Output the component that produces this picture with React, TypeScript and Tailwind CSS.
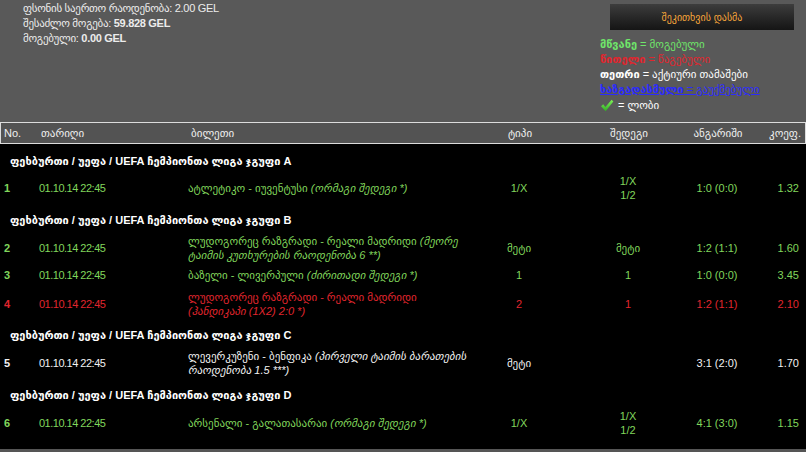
import React from 'react';

type Row = {
  kind: 'row';
  no: string;
  date: string;
  ticket: React.ReactNode;
  type: React.ReactNode;
  result: React.ReactNode;
  score: string;
  coef: string;
  color: 'green' | 'red' | 'white';
  cls: string;
};

type Group = { kind: 'group'; label: string; cls: string };

const colorCls = {
  green: 'text-[#80d65c]',
  red: 'text-[#e0262e]',
  white: 'text-[#f2f2f2]',
};

const twoLines = (a: string, b: string) => (
  <div className="flex flex-col items-center leading-[14px]">
    <span>{a}</span>
    <span>{b}</span>
  </div>
);

const items: (Row | Group)[] = [
  { kind: 'group', label: 'ფეხბურთი / უეფა / UEFA ჩემპიონთა ლიგა ჯგუფი A', cls: 'h-[26px]' },
  {
    kind: 'row', no: '1', date: '01.10.14 22:45', color: 'green', cls: 'h-[28px]',
    ticket: <span>ატლეტიკო - იუვენტუსი <i>(ორმაგი შედეგი *)</i></span>,
    type: '1/X', result: twoLines('1/X', '1/2'), score: '1:0 (0:0)', coef: '1.32',
  },
  { kind: 'group', label: 'ფეხბურთი / უეფა / UEFA ჩემპიონთა ლიგა ჯგუფი B', cls: 'mt-[4px] h-[28px]' },
  {
    kind: 'row', no: '2', date: '01.10.14 22:45', color: 'green', cls: 'h-[27px]',
    ticket: (
      <div className="flex flex-col leading-[14px]">
        <span>ლუდოგორეც რაზგრადი - რეალი მადრიდი <i>(მეორე</i></span>
        <i>ტაიმის კუთხურების რაოდენობა 6 **)</i>
      </div>
    ),
    type: 'მეტი', result: 'მეტი', score: '1:2 (1:1)', coef: '1.60',
  },
  {
    kind: 'row', no: '3', date: '01.10.14 22:45', color: 'green', cls: 'h-[28px]',
    ticket: <span>ბაზელი - ლივერპული <i>(ძირითადი შედეგი *)</i></span>,
    type: '1', result: '1', score: '1:0 (0:0)', coef: '3.45',
  },
  {
    kind: 'row', no: '4', date: '01.10.14 22:45', color: 'red', cls: 'mt-[1px] h-[28px]',
    ticket: (
      <div className="flex flex-col leading-[14px]">
        <span>ლუდოგორეც რაზგრადი - რეალი მადრიდი</span>
        <i>(ჰანდიკაპი (1X2) 2:0 *)</i>
      </div>
    ),
    type: '2', result: '1', score: '1:2 (1:1)', coef: '2.10',
  },
  { kind: 'group', label: 'ფეხბურთი / უეფა / UEFA ჩემპიონთა ლიგა ჯგუფი C', cls: 'mt-[4px] h-[27px]' },
  {
    kind: 'row', no: '5', date: '01.10.14 22:45', color: 'white', cls: 'h-[28px]',
    ticket: (
      <div className="flex flex-col leading-[14px]">
        <span>ლევერკუზენი - ბენფიკა <i>(პირველი ტაიმის ბარათების</i></span>
        <i>რაოდენობა 1.5 ***)</i>
      </div>
    ),
    type: 'მეტი', result: '', score: '3:1 (2:0)', coef: '1.70',
  },
  { kind: 'group', label: 'ფეხბურთი / უეფა / UEFA ჩემპიონთა ლიგა ჯგუფი D', cls: 'mt-[5px] h-[27px]' },
  {
    kind: 'row', no: '6', date: '01.10.14 22:45', color: 'green', cls: 'h-[28px]',
    ticket: <span>არსენალი - გალათასარაი <i>(ორმაგი შედეგი *)</i></span>,
    type: '1/X', result: twoLines('1/X', '1/2'), score: '4:1 (3:0)', coef: '1.15',
  },
];

const grid = 'grid grid-cols-[37px_151px_282px_98px_120px_58px_60px]';

function CheckIcon() {
  return (
    <svg width="14" height="13" viewBox="0 0 14 13">
      <defs>
        <linearGradient id="ck" x1="0" y1="0" x2="0" y2="1">
          <stop offset="0" stopColor="#7ef05a" />
          <stop offset="1" stopColor="#2fae22" />
        </linearGradient>
      </defs>
      <path d="M1 7.2 L3.2 5.2 L5.4 8 L11.6 0.8 L13.4 2.6 L5.6 12.2 Z" fill="url(#ck)" />
    </svg>
  );
}

export default function App() {
  return (
    <div className="w-[806px] h-[452px] overflow-hidden bg-black flex flex-col font-['Liberation_Sans','DejaVu_Sans',sans-serif] text-[11px]">
      <div className="h-[122px] bg-[#595959] flex justify-between shrink-0">
        <div className="pl-[23px] pt-[1px] leading-[15px] text-[#ececec] tracking-[-0.3px]">
          <div>ფსონის საერთო რაოდენობა: 2.00 GEL</div>
          <div>შესაძლო მოგება: <b>59.828 GEL</b></div>
          <div>მოგებული: <b>0.00 GEL</b></div>
        </div>
        <div className="w-[206px] flex flex-col">
          <div className="ml-[10px] mt-[4px] w-[184px] h-[26px] flex items-center justify-center bg-gradient-to-b from-[#3d3d3d] to-[#151515] text-[#f6a53a] text-[10px]">
            შეკითხვის დასმა
          </div>
          <div className="mt-[7px] leading-[15px] text-[11px]">
            <div className="text-[#6fe56a]"><b>მწვანე</b> = მოგებული</div>
            <div className="text-[#e0262e]"><b>წითელი</b> = წაგებული</div>
            <div className="text-white"><b>თეთრი</b> = აქტიური თამაშები</div>
            <div className="text-[#2b2bff] underline line-through"><b>ხაზგადასმული</b> = გაუქმებული</div>
            <div className="flex items-center gap-[4px] text-white mt-[1px]">
              <CheckIcon />
              <span>= ლობი</span>
            </div>
          </div>
        </div>
      </div>

      <div className={`${grid} h-[22px] items-center bg-[#535353] border border-[#dcdcdc] text-[#efefef] shrink-0`}>
        <span className="pl-[3px]">No.</span>
        <span className="pl-[3px]">თარიღი</span>
        <span className="pl-[2px]">ბილეთი</span>
        <span className="text-center">ტიპი</span>
        <span className="text-center">შედეგი</span>
        <span className="text-center">ანგარიში</span>
        <span className="text-right pr-[6px]">კოეფ.</span>
      </div>

      <div className="flex-1 pt-[4px] flex flex-col">
        {items.map((it, i) =>
          it.kind === 'group' ? (
            <div key={i} className={`${it.cls} flex items-center pl-[10px] font-bold text-white`}>
              {it.label}
            </div>
          ) : (
            <div key={i} className={`${grid} ${it.cls} items-center whitespace-nowrap ${colorCls[it.color]}`}>
              <span className="pl-[4px] font-bold">{it.no}</span>
              <span className="pl-[2px] tracking-[-0.5px]">{it.date}</span>
              <div>{it.ticket}</div>
              <div className="flex justify-center">{it.type}</div>
              <div className="flex justify-center">{it.result}</div>
              <div className="flex justify-center">{it.score}</div>
              <span className="text-right pr-[7px]">{it.coef}</span>
            </div>
          )
        )}
      </div>
      <div className="h-[3px] bg-[#555] shrink-0" />
    </div>
  );
}
